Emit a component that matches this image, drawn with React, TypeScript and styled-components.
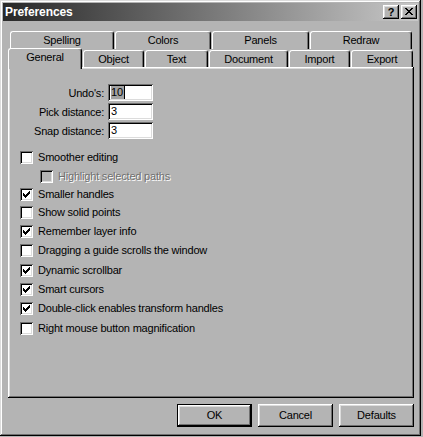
import React from "react";
import styled, { createGlobalStyle, css } from "styled-components";

const FACE = "#b4b4b4";
const SHADOW = "#707070";
const LIGHT = "#dcdcdc";

const GlobalStyle = createGlobalStyle`
  html, body { margin: 0; padding: 0; background: ${FACE}; }
  * { box-sizing: border-box; }
`;

const raised = css`
  box-shadow: inset -1px -1px #000, inset 1px 1px #fff, inset -2px -2px ${SHADOW}, inset 2px 2px ${LIGHT};
`;

const sunken = css`
  box-shadow: inset 1px 1px ${SHADOW}, inset -1px -1px #fff, inset 2px 2px #000, inset -2px -2px ${LIGHT};
`;

const Window = styled.div`
  width: 421px;
  height: 436px;
  padding: 3px;
  background: ${FACE};
  box-shadow: inset -1px -1px #000, inset 1px 1px ${LIGHT}, inset -2px -2px ${SHADOW}, inset 2px 2px #fff;
  display: flex;
  flex-direction: column;
  font-family: "Liberation Sans", Arial, sans-serif;
  font-size: 11px;
  letter-spacing: -0.2px;
  color: #000;
`;

const TitleBar = styled.div`
  height: 18px;
  display: flex;
  align-items: center;
  padding: 0 1px 0 2px;
  background: linear-gradient(to right, #282828, #c8c8c8);
`;

const Title = styled.div`
  color: #fff;
  font-weight: bold;
  font-size: 12px;
  letter-spacing: -0.1px;
`;

const TitleButtons = styled.div`
  margin-left: auto;
  display: flex;
  gap: 2px;
`;

const TitleButton = styled.div`
  width: 16px;
  height: 14px;
  background: ${FACE};
  ${raised};
  display: flex;
  align-items: center;
  justify-content: center;
  font-weight: bold;
  font-size: 11px;
  line-height: 14px;
  padding-bottom: 1px;
`;

const Body = styled.div`
  padding: 10px 0 0 5px;
  display: flex;
  flex-direction: column;
`;

const TabRow = styled.div<{ $indent: number }>`
  display: flex;
  align-items: flex-end;
  gap: 1px;
  height: 18px;
  padding-left: ${(p) => p.$indent}px;
`;

const Tab = styled.div<{ $w: number; $active?: boolean; $h: number }>`
  width: ${(p) => p.$w}px;
  height: ${(p) => p.$h}px;
  background: ${FACE};
  border-top: 1px solid #fff;
  border-left: 1px solid #fff;
  border-right: 1px solid #000;
  border-radius: 3px 3px 0 0;
  box-shadow: inset -1px 0 ${SHADOW};
  display: flex;
  align-items: center;
  justify-content: center;
  line-height: 13px;
  ${(p) =>
    p.$active &&
    css`
      position: relative;
      z-index: 1;
      margin-bottom: -2px;
      padding-bottom: 3px;
    `}
`;

const Panel = styled.div`
  position: relative;
  width: 406px;
  height: 331px;
  background: ${FACE};
  ${raised};
  padding: 17px 0 0 12px;
`;

const FieldGrid = styled.div`
  display: grid;
  grid-template-columns: 84px 45px;
  column-gap: 4px;
  row-gap: 2px;
  align-items: center;
`;

const FieldLabel = styled.label`
  text-align: right;
  white-space: nowrap;
`;

const TextBox = styled.div`
  width: 45px;
  height: 17px;
  background: #fff;
  ${sunken};
  display: flex;
  align-items: center;
  padding-left: 3px;
  line-height: 13px;
`;

const Selected = styled.span`
  background: #a2a2a2;
  padding-right: 1px;
`;

const Caret = styled.span`
  display: inline-block;
  width: 1px;
  height: 13px;
  background: #000;
`;

const CheckList = styled.div`
  margin-top: 12px;
  display: flex;
  flex-direction: column;
`;

const CheckRow = styled.div<{ $h: number; $indent: number }>`
  height: ${(p) => p.$h}px;
  display: flex;
  align-items: flex-start;
  gap: 5px;
  padding-left: ${(p) => p.$indent}px;
`;

const Box = styled.div<{ $disabled?: boolean }>`
  width: 13px;
  height: 13px;
  flex: none;
  background: ${(p) => (p.$disabled ? FACE : "#fff")};
  ${sunken};
  position: relative;
  svg { position: absolute; left: 3px; top: 3px; }
`;

const CheckLabel = styled.span<{ $disabled?: boolean }>`
  line-height: 13px;
  white-space: nowrap;
  ${(p) =>
    p.$disabled &&
    css`
      color: ${SHADOW};
      text-shadow: 1px 1px #fff;
    `}
`;

const ButtonRow = styled.div`
  width: 406px;
  margin-top: 6px;
  display: flex;
  justify-content: flex-end;
  gap: 6px;
`;

const Button = styled.div<{ $default?: boolean }>`
  width: 75px;
  height: 23px;
  background: ${FACE};
  display: flex;
  align-items: center;
  justify-content: center;
  line-height: 13px;
  ${(p) =>
    p.$default
      ? css`
          border: 1px solid #000;
          box-shadow: inset -1px -1px #000, inset 1px 1px #fff, inset -2px -2px ${SHADOW}, inset 2px 2px ${LIGHT};
        `
      : raised}
`;

const CheckMark = () => (
  <svg width="7" height="7" viewBox="0 0 7 7" shapeRendering="crispEdges">
    <path
      d="M6 0h1v1h-1zM5 1h2v1h-2zM0 2h1v1h-1zM4 2h3v1h-3zM0 3h2v1h-2zM3 3h3v1h-3zM0 4h5v1h-5zM1 5h3v1h-3zM2 6h1v1h-1z"
      fill="#000"
    />
  </svg>
);

const CloseGlyph = () => (
  <svg width="8" height="7" viewBox="0 0 8 7" shapeRendering="crispEdges">
    <path
      d="M0 0h2v1h-2zM6 0h2v1h-2zM1 1h2v1h-2zM5 1h2v1h-2zM2 2h4v1h-4zM3 3h2v1h-2zM2 4h4v1h-4zM1 5h2v1h-2zM5 5h2v1h-2zM0 6h2v1h-2zM6 6h2v1h-2z"
      fill="#000"
    />
  </svg>
);

const topTabs = [
  { label: "Spelling", w: 104 },
  { label: "Colors", w: 96 },
  { label: "Panels", w: 97 },
  { label: "Redraw", w: 102 },
];

const bottomTabs = [
  { label: "General", w: 74, active: true },
  { label: "Object", w: 61 },
  { label: "Text", w: 63 },
  { label: "Document", w: 79 },
  { label: "Import", w: 61 },
  { label: "Export", w: 62 },
];

const checks = [
  { label: "Smoother editing", checked: false, h: 19 },
  { label: "Highlight selected paths", checked: false, h: 18, indent: 20, disabled: true },
  { label: "Smaller handles", checked: true, h: 18 },
  { label: "Show solid points", checked: false, h: 19 },
  { label: "Remember layer info", checked: true, h: 19 },
  { label: "Dragging a guide scrolls the window", checked: false, h: 20 },
  { label: "Dynamic scrollbar", checked: true, h: 19 },
  { label: "Smart cursors", checked: true, h: 19 },
  { label: "Double-click enables transform handles", checked: true, h: 20 },
  { label: "Right mouse button magnification", checked: false, h: 19 },
];

export default function App() {
  return (
    <>
      <GlobalStyle />
      <Window>
        <TitleBar>
          <Title>Preferences</Title>
          <TitleButtons>
            <TitleButton>?</TitleButton>
            <TitleButton>
              <CloseGlyph />
            </TitleButton>
          </TitleButtons>
        </TitleBar>
        <Body>
          <TabRow $indent={2}>
            {topTabs.map((t) => (
              <Tab key={t.label} $w={t.w} $h={18}>
                {t.label}
              </Tab>
            ))}
          </TabRow>
          <TabRow $indent={0}>
            {bottomTabs.map((t) => (
              <Tab key={t.label} $w={t.w} $h={t.active ? 21 : 17} $active={t.active}>
                {t.label}
              </Tab>
            ))}
          </TabRow>
          <Panel>
            <FieldGrid>
              <FieldLabel>Undo's:</FieldLabel>
              <TextBox>
                <Selected>10</Selected>
                <Caret />
              </TextBox>
              <FieldLabel>Pick distance:</FieldLabel>
              <TextBox>3</TextBox>
              <FieldLabel>Snap distance:</FieldLabel>
              <TextBox>3</TextBox>
            </FieldGrid>
            <CheckList>
              {checks.map((c) => (
                <CheckRow key={c.label} $h={c.h} $indent={c.indent ?? 0}>
                  <Box $disabled={c.disabled}>{c.checked && <CheckMark />}</Box>
                  <CheckLabel $disabled={c.disabled}>{c.label}</CheckLabel>
                </CheckRow>
              ))}
            </CheckList>
          </Panel>
          <ButtonRow>
            <Button $default>OK</Button>
            <Button>Cancel</Button>
            <Button>Defaults</Button>
          </ButtonRow>
        </Body>
      </Window>
    </>
  );
}
